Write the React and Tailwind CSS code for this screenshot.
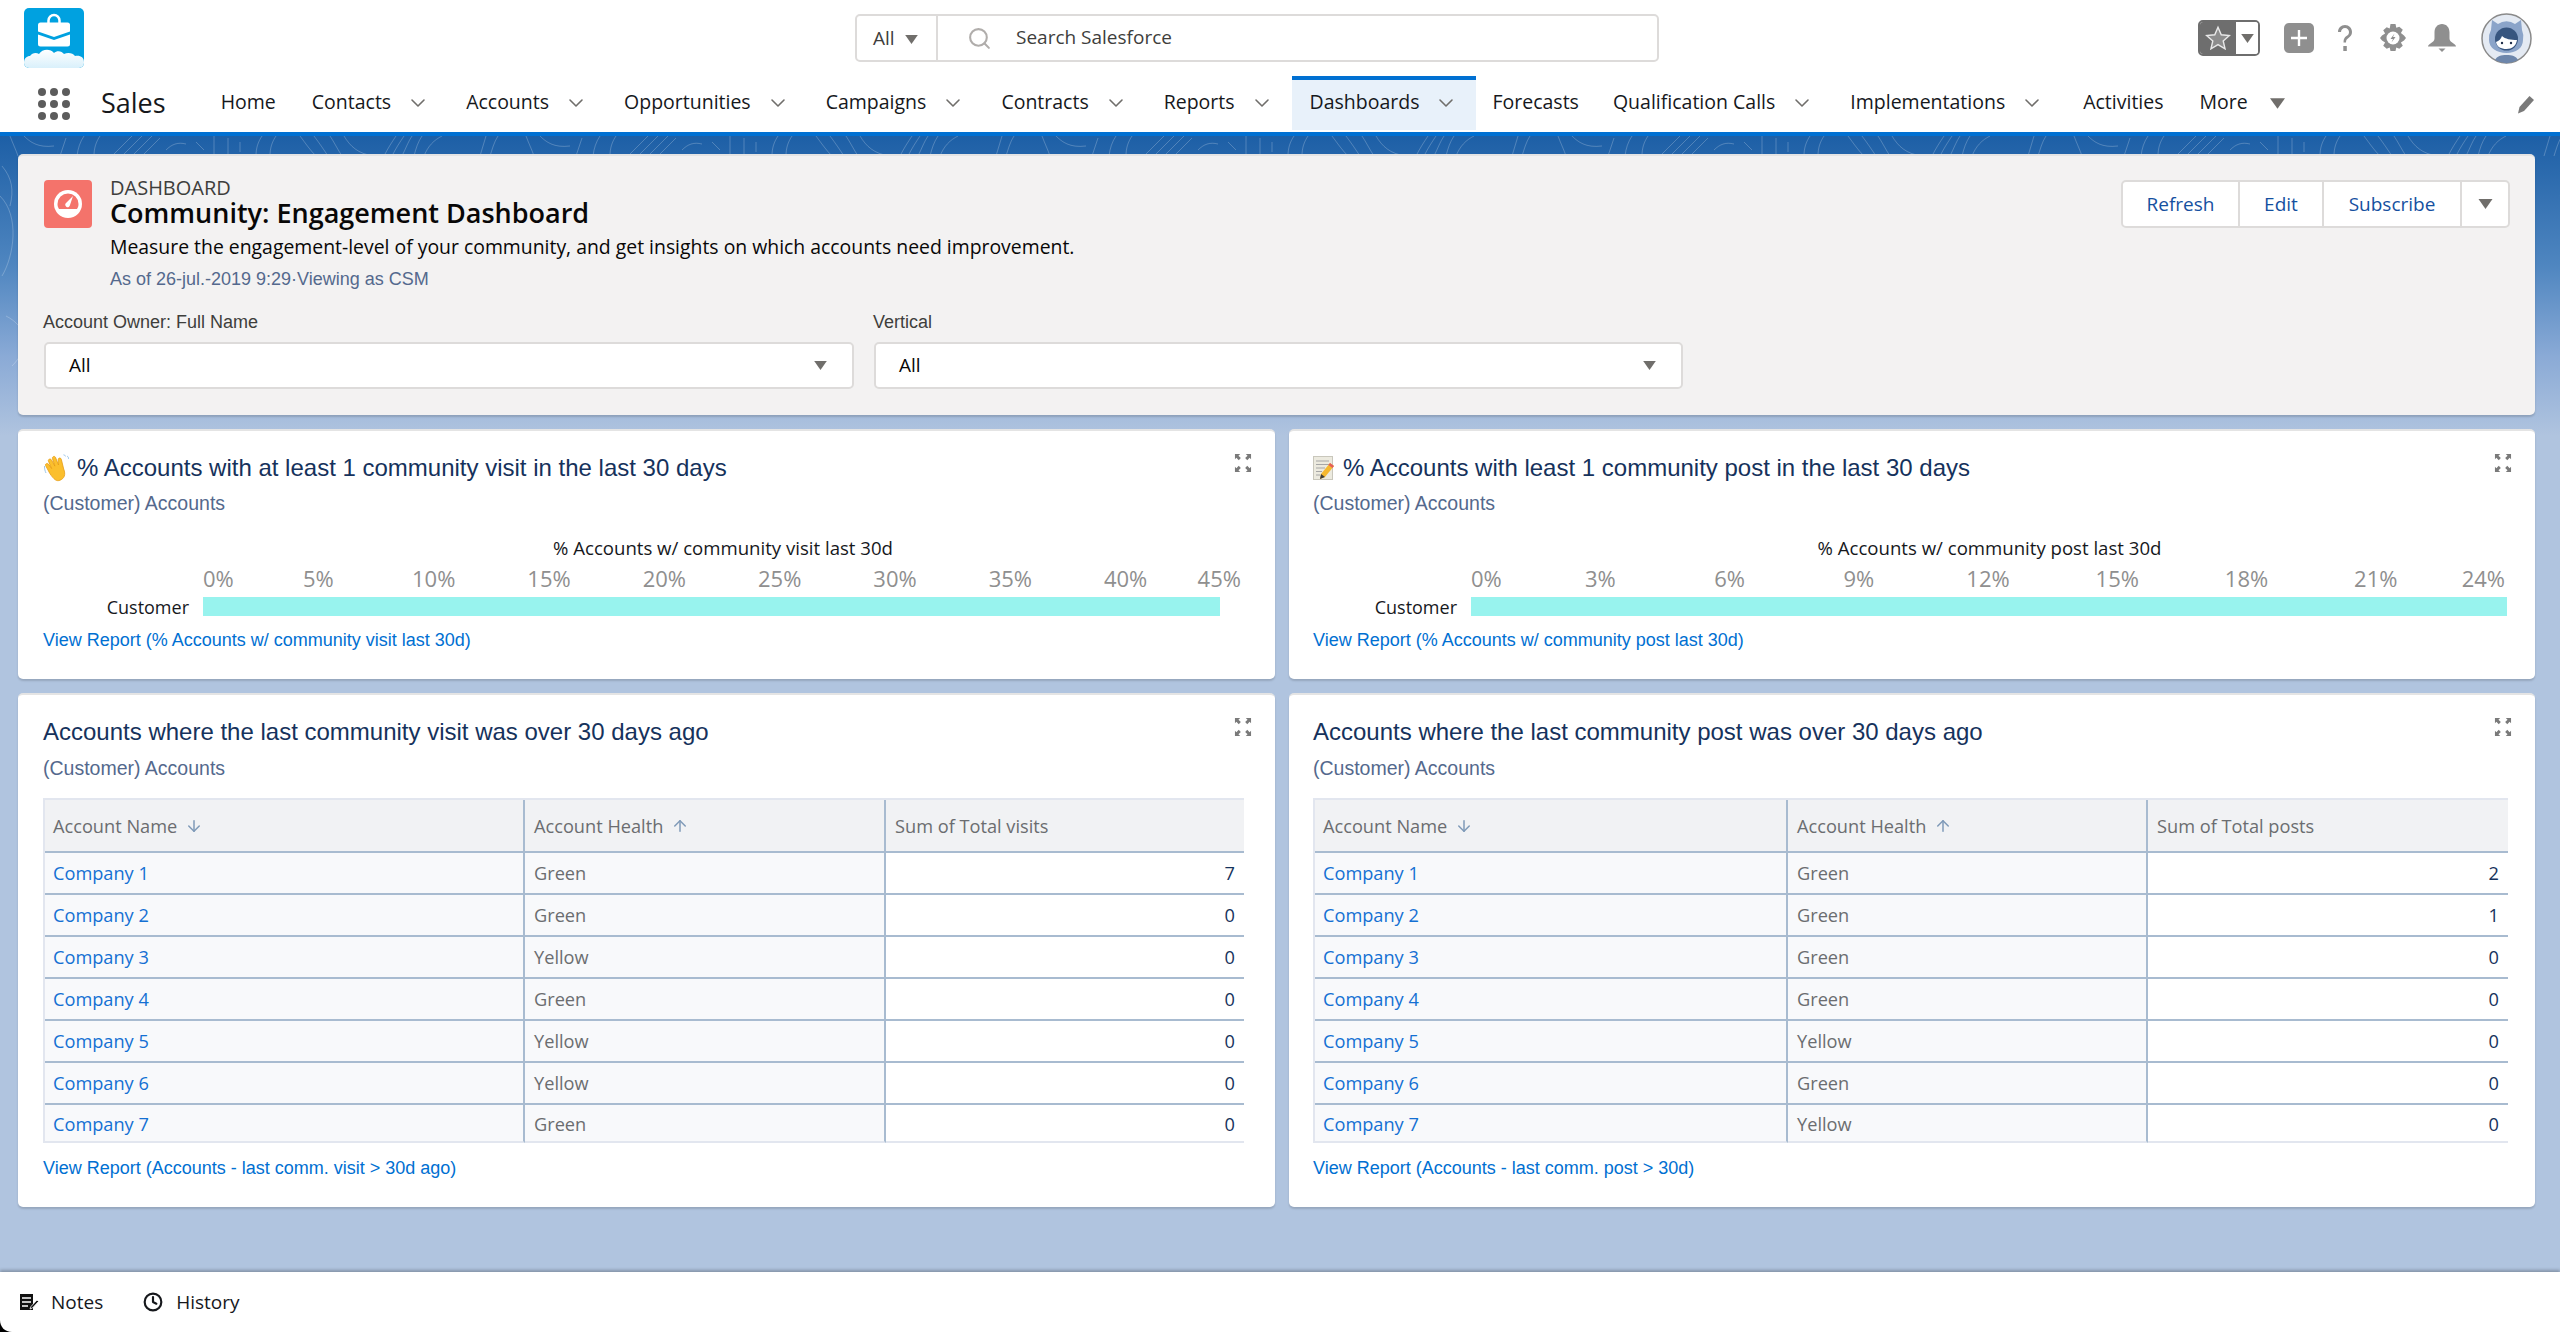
import { ArrowDown, ArrowUp, ChevronDown, Clock, Search } from 'lucide-react';

const navItems = [
  { label: 'Home' },
  { label: 'Contacts', menu: true },
  { label: 'Accounts', menu: true },
  { label: 'Opportunities', menu: true },
  { label: 'Campaigns', menu: true },
  { label: 'Contracts', menu: true },
  { label: 'Reports', menu: true },
  { label: 'Dashboards', menu: true, active: true },
  { label: 'Forecasts', tight: true },
  { label: 'Qualification Calls', menu: true },
  { label: 'Implementations', menu: true, loose: true },
  { label: 'Activities' },
];

const visitRows = [
  ['Company 1', 'Green', 7],
  ['Company 2', 'Green', 0],
  ['Company 3', 'Yellow', 0],
  ['Company 4', 'Green', 0],
  ['Company 5', 'Yellow', 0],
  ['Company 6', 'Yellow', 0],
  ['Company 7', 'Green', 0],
];

const postRows = [
  ['Company 1', 'Green', 2],
  ['Company 2', 'Green', 1],
  ['Company 3', 'Green', 0],
  ['Company 4', 'Green', 0],
  ['Company 5', 'Yellow', 0],
  ['Company 6', 'Green', 0],
  ['Company 7', 'Yellow', 0],
];

const Caret = ({ className = '' }) => (
  <svg viewBox="0 0 14 10" className={className}>
    <path d="M0 0h14L7 10z" fill="#706e6b" />
  </svg>
);

const Logo = () => (
  <svg viewBox="0 0 60 60" className="w-[60px] h-[60px]">
    <defs>
      <linearGradient id="cloud" x1="0" y1="0" x2="0" y2="1">
        <stop offset="0" stopColor="#ffffff" />
        <stop offset="1" stopColor="#d9f0fb" />
      </linearGradient>
    </defs>
    <rect width="60" height="60" rx="5" fill="#00a1e0" />
    <path d="M0 55c0-5 3-7 6-7 2-3 6-4 9-2 3-5 11-6 15-1 3-3 8-2 10 1 4-2 9-1 11 2 5-1 9 1 9 6v1a5 5 0 0 1-5 5H5a5 5 0 0 1-5-5z" fill="url(#cloud)" />
    <path d="M24.500 15v-2.500a5.500 5.500 0 0 1 11 0V15" fill="none" stroke="#fff" strokeWidth="2.500" />
    <path d="M14 17a2.500 2.500 0 0 1 2.500-2.500h27A2.500 2.500 0 0 1 46 17v6.500L30 29l-16-5.500z" fill="#fff" />
    <path d="M14 26.500L30 32l16-5.500V36a2.500 2.500 0 0 1-2.500 2.500h-27A2.500 2.500 0 0 1 14 36z" fill="#fff" />
  </svg>
);

const Avatar = () => (
  <svg viewBox="0 0 51 51" className="w-[51px] h-[51px]">
    <circle cx="25.500" cy="25.500" r="24.500" fill="#e4eaf3" stroke="#8a8a8a" strokeWidth="1.500" />
    <path d="M11 7l6 4a15 15 0 0 1 17 0l6-4 1 10a17 17 0 0 1 1 10c0 8-7 13-16.500 13S8 35 8 27a17 17 0 0 1 2-10z" fill="#8ba4c9" />
    <path d="M14 47c2-4 6-5 11.500-5s9.500 1 11.500 5a24 24 0 0 1-23 0z" fill="#6d86ab" />
    <circle cx="25.500" cy="26" r="11.500" fill="#37557f" />
    <path d="M15 29c3-1 5-3 6-6 3 3 9 4 15 4-1 6-5 9-10.500 9S16 34 15 29z" fill="#fff" />
    <circle cx="21" cy="30" r="1.200" fill="#1f2f4a" />
    <circle cx="30" cy="30" r="1.200" fill="#1f2f4a" />
  </svg>
);

const Expand = ({ className = '' }) => (
  <svg viewBox="0 0 18 18" className={`w-[18px] h-[18px] ${className}`} fill="#7a7a7a">
    <path d="M0 0h6.500L4.700 1.800l2.500 2.500-2.200 2.200-2.500-2.500L1 5.500V0z" transform="scale(0.95)" />
    <path d="M18 0h-6.500l1.800 1.800-2.500 2.500 2.200 2.200 2.500-2.500L17 5.500V0z" transform="translate(0.900 0) scale(0.95)" />
    <path d="M0 18h6.500l-1.800-1.800 2.500-2.500-2.200-2.200-2.500 2.500L1 12.500V18z" transform="translate(0 0.900) scale(0.95)" />
    <path d="M18 18h-6.500l1.800-1.800-2.500-2.500 2.200-2.200 2.500 2.500 1.500-1.500V18z" transform="translate(0.900 0.900) scale(0.95)" />
  </svg>
);

const WaveEmoji = () => (
  <svg viewBox="0 0 26 28" className="w-[26px] h-[28px] shrink-0">
    <g transform="rotate(-22 13 16)">
      <path d="M6 17L5 8c0-2 2.800-2 3.300 0L9.500 13 9.300 5c0-2 3-2 3.300 0l.8 7L14 4c.4-2 3.200-2 3.300 .3l-.1 8 1.700-5c.8-2 3.300-1.200 3 1L20.500 18c0 6-3 9-7.500 9-4 0-5.500-3-7-10z" fill="#fbbf2d" stroke="#e59a12" strokeWidth="0.700" />
    </g>
    <path d="M1.500 12c0 3 .5 5 1.500 7M24 2c1 .5 1.500 1.500 1.800 3M20.500 .8c1 .3 1.800 .8 2.300 1.500" stroke="#9cc5e8" strokeWidth="1" fill="none" />
  </svg>
);

const MemoEmoji = () => (
  <svg viewBox="0 0 22 24" className="w-[22px] h-[24px] shrink-0">
    <rect x="0.500" y="0.500" width="19" height="23" fill="#eceadf" stroke="#c9c7bc" />
    <path d="M3 5h13M3 8.500h13M3 12h9M3 15.500h6M3 19h4" stroke="#a6a6a6" strokeWidth="1" />
    <path d="M17 7l4 3-9 11-5 2 1-5z" fill="#f5b82e" />
    <path d="M17 7l4 3-1.500 2-4-3z" fill="#e35d5b" />
    <path d="M8 18l4 3-5 2z" fill="#3c3c3c" />
  </svg>
);

function BarCard({ icon, title, chartTitle, ticks, link, padLeft, titleWidth, labelWidth, axisWidth, barWidth }) {
  return (
    <section className={`relative bg-white rounded-[5px] border-t-2 border-[#e4e4e4] shadow-[0_2px_2px_rgba(0,0,0,0.15)] pt-[22px] ${padLeft}`}>
      <Expand className="absolute right-[23px] top-[23px]" />
      <div className="flex items-center gap-[8px] h-[30px]">
        {icon}
        <h2 className="font-['Liberation_Sans',sans-serif] text-[24px] leading-[30px] text-[#16325c]">{title}</h2>
      </div>
      <p className="mt-[8px] font-['Liberation_Sans',sans-serif] text-[19.500px] leading-[24px] text-[#54698d]">(Customer) Accounts</p>
      <div className={`mt-[21px] text-center text-[18.600px] leading-[24px] text-[#16181c] ${titleWidth}`}>{chartTitle}</div>
      <div className="flex mt-[6px]">
        <div className={`shrink-0 ${labelWidth}`} />
        <div className={`flex justify-between text-[22px] leading-[24px] text-[#8f8f8f] ${axisWidth}`}>
          {ticks.map((t, i) => (
            <span
              key={t}
              className={i === 0
                ? 'flex w-0 justify-start whitespace-nowrap'
                : i === ticks.length - 1
                  ? 'flex w-0 justify-end whitespace-nowrap'
                  : 'flex w-0 justify-center whitespace-nowrap'}
            >
              {t}
            </span>
          ))}
        </div>
      </div>
      <div className="flex items-center h-[19px] mt-[7px]">
        <div className={`shrink-0 text-right pr-[14px] pt-[2px] text-[18px] text-[#16181c] ${labelWidth}`}>Customer</div>
        <div className={`h-[19px] bg-[#98f3ee] ${barWidth}`} />
      </div>
      <a className="block mt-[12px] font-['Liberation_Sans',sans-serif] text-[18px] leading-[24px] text-[#0070d2]">{link}</a>
    </section>
  );
}

function TableCard({ title, valueHeader, rows, link, padLeft, tableWidth, nameWidth, healthWidth }) {
  return (
    <section className={`relative bg-white rounded-[5px] border-t-2 border-[#e4e4e4] shadow-[0_2px_2px_rgba(0,0,0,0.15)] pt-[22px] ${padLeft}`}>
      <Expand className="absolute right-[23px] top-[23px]" />
      <h2 className="font-['Liberation_Sans',sans-serif] text-[24px] leading-[30px] text-[#16325c]">{title}</h2>
      <p className="mt-[9px] font-['Liberation_Sans',sans-serif] text-[19.500px] leading-[24px] text-[#54698d]">(Customer) Accounts</p>
      <table className={`mt-[18px] table-fixed border-separate border-spacing-0 border-t-2 border-l-2 border-[#e2e6ef] text-[18.200px] ${tableWidth}`}>
        <colgroup>
          <col className={nameWidth} />
          <col className={healthWidth} />
          <col />
        </colgroup>
        <thead>
          <tr className="h-[53px] bg-[#f1f2f4] text-[#6b6d70]">
            <th className="font-normal text-left pl-[8px] pt-[2px] border-b-2 border-r-2 border-[#a8bbd0]">
              <span className="inline-flex items-center gap-[8px]">Account Name <ArrowDown className="w-[18px] h-[18px] text-[#7f9ab8]" /></span>
            </th>
            <th className="font-normal text-left pl-[9px] pt-[2px] border-b-2 border-r-2 border-[#a8bbd0]">
              <span className="inline-flex items-center gap-[8px]">Account Health <ArrowUp className="w-[18px] h-[18px] text-[#7f9ab8]" /></span>
            </th>
            <th className="font-normal text-left pl-[9px] pt-[2px] border-b-2 border-[#a8bbd0]">{valueHeader}</th>
          </tr>
        </thead>
        <tbody>
          {rows.map((r, i) => {
            const last = i === rows.length - 1;
            const line = last ? 'pt-[4px] border-b-2 border-b-[#e2e6ef]' : 'pt-[2px] border-b-2 border-b-[#a8bbd0]';
            return (
              <tr key={r[0]} className={last ? 'h-[38px]' : 'h-[42px]'}>
                <td className={`bg-[#f8f9fb] pl-[8px] text-[#1470d3] border-r-2 border-r-[#a8bbd0] ${line}`}>{r[0]}</td>
                <td className={`bg-[#f8f9fb] pl-[9px] text-[#6b6d70] border-r-2 border-r-[#a8bbd0] ${line}`}>{r[1]}</td>
                <td className={`bg-white pr-[9px] text-right text-[#16325c] ${line}`}>{r[2]}</td>
              </tr>
            );
          })}
        </tbody>
      </table>
      <a className="block mt-[13px] font-['Liberation_Sans',sans-serif] text-[18px] leading-[24px] text-[#0070d2]">{link}</a>
    </section>
  );
}

export default function App() {
  return (
    <div className="relative flex flex-col h-[1332px] overflow-hidden bg-white font-['Open_Sans',sans-serif]">
      <header className="flex items-center h-[76px] shrink-0 pl-[24px]">
        <div className="self-start mt-[8px]"><Logo /></div>
        <div className="flex items-stretch ml-[771px] w-[804px] h-[48px] border-2 border-[#dddbda] rounded-[5px] text-[19px] text-[#3e3e3c]">
          <div className="flex items-center w-[81px] pl-[16px] border-r-2 border-[#dddbda]">
            All
            <Caret className="w-[13px] h-[9px] ml-[10px] mt-[2px]" />
          </div>
          <div className="flex items-center pl-[29px]">
            <Search className="w-[25px] h-[25px] text-[#b0adab]" strokeWidth={2} />
            <span className="ml-[24px] -mt-[1px]">Search Salesforce</span>
          </div>
        </div>
        <div className="flex items-center ml-[539px]">
          <div className="flex h-[36px] w-[62px] rounded-[5px] border-2 border-[#6e6e6e] overflow-hidden">
            <div className="flex items-center justify-center w-[36px] bg-[#6e6e6e]">
              <svg viewBox="0 0 24 24" className="w-[26px] h-[26px]">
                <path d="M12 2l3 7 7.500.7-5.700 5 1.700 7.300-6.500-3.900-6.500 3.900 1.700-7.300-5.700-5L9 9z" fill="#8d8d8d" stroke="#e8e8e8" strokeWidth="1.300" />
              </svg>
            </div>
            <div className="flex flex-1 items-center justify-center bg-white">
              <Caret className="w-[13px] h-[9px]" />
            </div>
          </div>
          <div className="flex items-center justify-center ml-[24px] w-[30px] h-[30px] rounded-[5px] bg-[#8f8f8f]">
            <svg viewBox="0 0 20 20" className="w-[20px] h-[20px]"><path d="M8.800 2h2.400v6.800H18v2.400h-6.800V18H8.800v-6.800H2V8.800h6.800z" fill="#fff" /></svg>
          </div>
          <svg viewBox="0 0 20 30" className="ml-[21px] w-[20px] h-[30px]">
            <path d="M3 9c0-4 3-7 7-7s7 3 7 7c0 3-1.500 4.500-3.500 6-1.800 1.300-2.500 2-2.500 4.500H8.500c0-3.500 1-5 3-6.400C13.200 12 14 11 14 9c0-2.300-1.800-4-4-4S6 6.700 6 9z" fill="#8f8f8f" />
            <rect x="8.300" y="23" width="3.500" height="5" fill="#8f8f8f" />
          </svg>
          <svg viewBox="0 0 26 28" className="ml-[25px] w-[26px] h-[28px]">
            <path d="M10.500 0h5l.8 3.800 3-1.100 3.500 3-1.900 3.200L24 11.500 26 14l-2 2.500-3.100 2 1.900 3.200-3.500 3-3-1.100-.8 3.400h-5l-.8-3.400-3 1.100-3.500-3 1.900-3.200L2 16.500 0 14l2-2.500 3.100-2-1.900-3.200 3.500-3 3 1.100z" fill="#8f8f8f" />
            <circle cx="13" cy="14" r="6.500" fill="#fff" />
            <path d="M14.500 9.500L10.500 15h2.500l-1.500 3.500 4-5.500H13z" fill="#8f8f8f" />
          </svg>
          <svg viewBox="0 0 28 28" className="ml-[22px] w-[28px] h-[28px]">
            <path d="M14 0c4.500 0 7.500 3.500 7.500 8.500v6c0 2 1.500 3.500 4 5 1.500 1 2.500 2 2.500 3H0c0-1 1-2 2.500-3 2.500-1.500 4-3 4-5v-6C6.500 3.500 9.500 0 14 0z" fill="#8f8f8f" />
            <path d="M10.500 24.500h7L14 28z" fill="#8f8f8f" />
          </svg>
          <div className="ml-[25px]"><Avatar /></div>
        </div>
      </header>

      <nav className="relative flex items-stretch h-[56px] shrink-0 text-[#16181c]">
        <div className="flex items-center pl-[38px]">
          <svg viewBox="0 0 32 32" className="w-[32px] h-[32px]" fill="#5c5c5c">
            {[4, 16, 28].flatMap(y => [4, 16, 28].map(x => <circle key={`${x}-${y}`} cx={x} cy={y} r="4" />))}
          </svg>
          <span className="ml-[31px] mr-[37px] text-[27px] -mt-[2px]">Sales</span>
        </div>
        {navItems.map(item => (
          <div
            key={item.label}
            className={item.active
              ? 'flex items-center h-[54px] px-[18px] pb-[6px] bg-[#e8f1fa] border-t-4 border-[#0070d2]'
              : item.tight
                ? 'flex items-center h-[54px] pl-[16px] pr-[16px] pb-[2px]'
                : item.loose
                  ? 'flex items-center h-[54px] pl-[18px] pr-[21px] pb-[2px]'
                  : 'flex items-center h-[54px] px-[18px] pb-[2px]'}
          >
            <span className="text-[19.500px] whitespace-nowrap">{item.label}</span>
            {item.menu && <ChevronDown className="ml-[15px] w-[24px] h-[24px] mt-[2px] text-[#706e6b]" strokeWidth={1.6} />}
          </div>
        ))}
        <div className="flex items-center h-[54px] pl-[18px] pb-[2px]">
          <span className="text-[19.500px]">More</span>
          <Caret className="ml-[22px] w-[15px] h-[11px] mt-[2px]" />
        </div>
        <svg viewBox="0 0 20 20" className="absolute right-[25px] top-[19px] w-[20px] h-[20px]">
          <path d="M14.500 1l4.500 4-10 11-6 2.500L4.500 12z" fill="#7a7a7a" />
        </svg>
      </nav>
      <div className="h-[4px] shrink-0 bg-[#0070d2]" />

      <main className="relative flex-1 min-h-0 pl-[18px] pr-[25px] pt-[18px] bg-[linear-gradient(#1d5fa6_0px,#4f86c0_130px,#8aaad6_220px,#b0c4df_300px,#b0c4df_100%)]">
        <svg className="absolute left-0 top-0 w-full h-[320px]" aria-hidden="true">
          <defs>
            <pattern id="topo" width="516" height="320" patternUnits="userSpaceOnUse">
              <g fill="none" stroke="#ffffff" strokeOpacity="0.22" strokeWidth="1">
                <path d="M10 0c3 8 6 14 8 20M24 0c6 6 14 12 30 10M66 2c-2 6-4 12-6 18M84 0c-4 6-6 12-7 20M100 0c-4 6-6 12-6 20" />
                <path d="M112 20L132 0M122 20L142 0M132 20L152 0M142 20L160 2M166 14c6-6 12-8 20-6M196 6l8 8" />
                <path d="M214 0v20M228 2v18M240 6v10M262 0c-4 6-6 12-6 20M276 0c-4 6-6 12-6 20" />
                <path d="M300 0c6 8 10 14 16 20M314 0c6 8 10 14 14 20M330 0c4 6 8 14 12 20M344 0c6 10 14 18 30 20M384 20c4-8 8-14 12-20M392 20c4-8 8-14 12-20M402 20c4-8 6-14 10-20M414 20c2-8 4-14 8-20M424 20c4-10 10-16 18-20M486 0l-6 20M498 0c-4 6-6 14-8 20" />
                <path d="M0 60c20 20 14 60 2 80M6 180c20 10 26 30 6 50M2 30c10 12 12 24 8 40" />
                <path d="M516 60c-14 14-18 50-2 70M500 40l16-16M496 60l20-22" />
              </g>
            </pattern>
          </defs>
          <rect width="100%" height="100%" fill="url(#topo)" />
        </svg>

        <div className="relative flex flex-col gap-[14px]">
          <section className="relative h-[261px] bg-[#f3f2f2] rounded-[5px] border-t-2 border-[#e4e4e4] shadow-[0_2px_2px_rgba(0,0,0,0.15)] px-[26px] pt-[24px]">
            <div className="flex">
              <div className="flex items-center justify-center w-[48px] h-[48px] rounded-[4px] bg-[#f4736b]">
                <svg viewBox="0 0 32 32" className="w-[32px] h-[32px]">
                  <circle cx="16" cy="16" r="14" fill="#fff" />
                  <path d="M5.500 16a10.500 10.500 0 0 1 21 0c0 2-.5 3.500-1.500 5H7c-1-1.500-1.500-3-1.500-5z" fill="#f4736b" />
                  <path d="M21 8l-3 9a2.400 2.400 0 1 1-4-2z" fill="#fff" />
                </svg>
              </div>
              <div className="ml-[18px] -mt-[2px]">
                <div className="text-[20px] leading-[20px] text-[#3e3e3c]">DASHBOARD</div>
                <h1 className="text-[27px] leading-[30px] font-semibold text-[#080707]">Community: Engagement Dashboard</h1>
                <p className="mt-[7px] text-[19.400px] leading-[24px] text-[#080707]">Measure the engagement-level of your community, and get insights on which accounts need improvement.</p>
                <p className="mt-[8px] font-['Liberation_Sans',sans-serif] text-[18px] leading-[24px] text-[#54698d]">As of 26-jul.-2019 9:29·Viewing as CSM</p>
              </div>
            </div>
            <div className="absolute right-[25px] top-[24px] flex h-[48px] bg-white border-2 border-[#dddbda] rounded-[5px] text-[19px] text-[#15509f]">
              <div className="flex items-center justify-center w-[117px] border-r-2 border-[#dddbda]">Refresh</div>
              <div className="flex items-center justify-center w-[84px] border-r-2 border-[#dddbda]">Edit</div>
              <div className="flex items-center justify-center w-[138px] border-r-2 border-[#dddbda]">Subscribe</div>
              <div className="flex items-center justify-center w-[46px]"><Caret className="w-[15px] h-[10px]" /></div>
            </div>
            <div className="grid grid-cols-[810px_809px] gap-x-[20px] mt-[19px] font-['Liberation_Sans',sans-serif] text-[18px] text-[#3e3e3c]">
              <label className="leading-[24px] -ml-[1px]">Account Owner: Full Name</label>
              <label className="leading-[24px] -ml-[1px]">Vertical</label>
              <div className="flex items-center justify-between mt-[8px] h-[47px] pl-[23px] pr-[25px] bg-white border-2 border-[#dddbda] rounded-[5px] font-['Open_Sans',sans-serif] text-[19px] text-[#080707]">
                All <Caret className="w-[13px] h-[9px]" />
              </div>
              <div className="flex items-center justify-between mt-[8px] h-[47px] pl-[23px] pr-[25px] bg-white border-2 border-[#dddbda] rounded-[5px] font-['Open_Sans',sans-serif] text-[19px] text-[#080707]">
                All <Caret className="w-[13px] h-[9px]" />
              </div>
            </div>
          </section>

          <div className="grid grid-cols-[1257px_1246px] grid-rows-[250px_514px] gap-x-[14px] gap-y-[14px]">
            <BarCard
              icon={<WaveEmoji />}
              title="% Accounts with at least 1 community visit in the last 30 days"
              chartTitle="% Accounts w/ community visit last 30d"
              ticks={['0%', '5%', '10%', '15%', '20%', '25%', '30%', '35%', '40%', '45%']}
              link="View Report (% Accounts w/ community visit last 30d)"
              padLeft="pl-[25px]"
              titleWidth="w-[1360px]"
              labelWidth="w-[160px]"
              axisWidth="w-[1038px]"
              barWidth="w-[1017px]"
            />
            <BarCard
              icon={<MemoEmoji />}
              title="% Accounts with least 1 community post in the last 30 days"
              chartTitle="% Accounts w/ community post last 30d"
              ticks={['0%', '3%', '6%', '9%', '12%', '15%', '18%', '21%', '24%']}
              link="View Report (% Accounts w/ community post last 30d)"
              padLeft="pl-[24px]"
              titleWidth="w-[1353px]"
              labelWidth="w-[158px]"
              axisWidth="w-[1034px]"
              barWidth="w-[1036px]"
            />
            <TableCard
              title="Accounts where the last community visit was over 30 days ago"
              valueHeader="Sum of Total visits"
              rows={visitRows}
              link="View Report (Accounts - last comm. visit > 30d ago)"
              padLeft="pl-[25px]"
              tableWidth="w-[1201px]"
              nameWidth="w-[480px]"
              healthWidth="w-[361px]"
            />
            <TableCard
              title="Accounts where the last community post was over 30 days ago"
              valueHeader="Sum of Total posts"
              rows={postRows}
              link="View Report (Accounts - last comm. post > 30d)"
              padLeft="pl-[24px]"
              tableWidth="w-[1195px]"
              nameWidth="w-[473px]"
              healthWidth="w-[360px]"
            />
          </div>
        </div>
      </main>

      <footer className="relative flex items-center h-[60px] shrink-0 bg-white pl-[19px] shadow-[0_-2px_3px_rgba(0,0,0,0.25)] text-[19px] text-[#16181c]">
        <svg viewBox="0 0 20 18" className="w-[20px] h-[18px]">
          <path d="M1 1h13v16H1z" fill="#111" />
          <path d="M3 5h9M3 9h9M3 13h6" stroke="#fff" strokeWidth="1.500" />
          <path d="M18 7l1.500 1.500-6 6.500-2.500 1 1-2.500z" fill="#111" stroke="#fff" strokeWidth="0.800" />
        </svg>
        <span className="ml-[12px]">Notes</span>
        <Clock className="ml-[40px] w-[20px] h-[20px]" strokeWidth={2.6} />
        <span className="ml-[13px]">History</span>
        <svg viewBox="0 0 12 12" className="absolute left-0 bottom-0 w-[12px] h-[12px]">
          <path d="M0 0c0 7 5 12 12 12H0z" fill="#000" />
        </svg>
      </footer>
    </div>
  );
}
